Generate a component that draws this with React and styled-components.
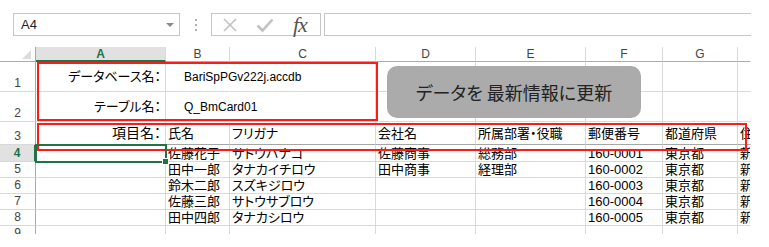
import React from "react";
import styled, { createGlobalStyle } from "styled-components";

const GREEN = "#217346";
const GRID = "#d9d9d9";
const CJK = `"Liberation Sans", "Noto Sans CJK JP", sans-serif`;

const COLS = [
  { key: "A", width: 130 },
  { key: "B", width: 64 },
  { key: "C", width: 146 },
  { key: "D", width: 100 },
  { key: "E", width: 110 },
  { key: "F", width: 77 },
  { key: "G", width: 75 },
  { key: "H", width: 13 },
];

const ROWS = [
  { num: 1, height: 30, kind: "meta", cells: ["データベース名：", "BariSpPGv222j.accdb"] },
  { num: 2, height: 30, kind: "meta", cells: ["テーブル名：", "Q_BmCard01"] },
  {
    num: 3,
    height: 23,
    kind: "head",
    cells: ["項目名：", "氏名", "フリガナ", "会社名", "所属部署・役職", "郵便番号", "都道府県", "住"],
  },
  { num: 4, height: 17, cells: ["", "佐藤花子", "サトウハナコ", "佐藤商事", "総務部", "160-0001", "東京都", "新"] },
  { num: 5, height: 16, cells: ["", "田中一郎", "タナカイチロウ", "田中商事", "経理部", "160-0002", "東京都", "新"] },
  { num: 6, height: 16, cells: ["", "鈴木二郎", "スズキジロウ", "", "", "160-0003", "東京都", "新"] },
  { num: 7, height: 16, cells: ["", "佐藤三郎", "サトウサブロウ", "", "", "160-0004", "東京都", "新"] },
  { num: 8, height: 16, cells: ["", "田中四郎", "タナカシロウ", "", "", "160-0005", "東京都", "新"] },
  { num: 9, height: 16, cells: [] },
];

const GlobalStyle = createGlobalStyle`
  body {
    margin: 0;
    background: #fff;
    font-family: ${CJK};
  }
`;

const Page = styled.div`
  width: 769px;
  height: 247px;
  overflow: hidden;
  background: #fff;
`;

const FormulaBar = styled.div`
  display: flex;
  align-items: stretch;
  height: 23px;
  padding: 13px 18px 0 13px;
`;

const NameBox = styled.div`
  box-sizing: border-box;
  width: 167px;
  border: 1px solid #c6c6c6;
  display: flex;
  align-items: center;
  justify-content: space-between;
  padding: 0 5px 0 7px;
  font-family: "Liberation Sans", sans-serif;
  font-size: 13px;
  color: #222;
`;

const Caret = styled.span`
  width: 0;
  height: 0;
  border-left: 4px solid transparent;
  border-right: 4px solid transparent;
  border-top: 4px solid #8a8a8a;
`;

const Grip = styled.div`
  width: 31px;
  display: flex;
  flex-direction: column;
  align-items: center;
  justify-content: center;
  gap: 3px;
`;

const GripDot = styled.span`
  width: 2px;
  height: 2px;
  background: #b0b0b0;
`;

const FxBox = styled.div`
  box-sizing: border-box;
  width: 110px;
  border: 1px solid #c6c6c6;
  display: flex;
  align-items: center;
  padding: 0 0 0 10px;
  gap: 18px;
`;

const FxText = styled.span`
  font-family: "Liberation Serif", serif;
  font-style: italic;
  font-size: 22px;
  line-height: 1;
  color: #555;
  letter-spacing: -1px;
  margin-left: 1px;
`;

const FormulaInput = styled.div`
  flex: 1;
  margin-left: 3px;
  border: 1px solid #c6c6c6;
  border-right: none;
`;

const Sheet = styled.div`
  position: relative;
  margin-top: 11px;
  width: 751px;
  height: 187px;
  overflow: hidden;
  font-feature-settings: "palt";
`;

const Grid = styled.div`
  display: grid;
  grid-template-columns: 36px ${COLS.map((c) => `${c.width}px`).join(" ")};
  grid-template-rows: 15px ${ROWS.map((r) => `${r.height}px`).join(" ")};
`;

const Corner = styled.div`
  box-sizing: border-box;
  border-right: 1px solid #ababab;
  border-bottom: 1px solid #ababab;
  display: flex;
  align-items: flex-end;
  justify-content: flex-end;
  padding: 0 4px 2px 0;
`;

const CornerMark = styled.span`
  width: 0;
  height: 0;
  border-left: 9px solid transparent;
  border-bottom: 9px solid #dcdcdc;
`;

const ColHeader = styled.div`
  box-sizing: border-box;
  background: ${(p) => (p.$active ? "#e1e1e1" : "#fff")};
  border-right: 1px solid ${(p) => (p.$last ? "transparent" : GRID)};
  border-bottom: ${(p) => (p.$active ? `2px solid ${GREEN}` : "1px solid #ababab")};
  display: flex;
  align-items: center;
  justify-content: center;
  font-family: "Liberation Sans", sans-serif;
  font-size: 12px;
  font-weight: ${(p) => (p.$active ? 700 : 400)};
  color: ${(p) => (p.$active ? GREEN : "#444")};
`;

const RowHeader = styled.div`
  box-sizing: border-box;
  background: ${(p) => (p.$active ? "#e1e1e1" : "#fff")};
  border-right: ${(p) => (p.$active ? `2px solid ${GREEN}` : "1px solid #ababab")};
  border-bottom: 1px solid ${GRID};
  display: flex;
  align-items: flex-end;
  justify-content: center;
  padding-bottom: 1px;
  font-family: "Liberation Sans", sans-serif;
  font-size: 12px;
  line-height: 13px;
  font-weight: ${(p) => (p.$active ? 700 : 400)};
  color: ${(p) => (p.$active ? GREEN : "#444")};
`;

const Cell = styled.div`
  box-sizing: border-box;
  border-right: 1px solid ${(p) => (p.$openRight ? "transparent" : GRID)};
  border-bottom: 1px solid ${(p) => (p.$strong ? "#a6a6a6" : GRID)};
  display: flex;
  align-items: center;
  justify-content: ${(p) => (p.$right ? "flex-end" : "flex-start")};
  padding: 0 ${(p) => p.$padRight}px 0 ${(p) => p.$padLeft}px;
  font-size: ${(p) => p.$size}px;
  line-height: 1;
  white-space: nowrap;
  overflow: ${(p) => (p.$spill ? "visible" : "hidden")};
  color: #000;
`;

const Outline = styled.div`
  position: absolute;
  box-sizing: border-box;
  border: 2px solid #ff1a1a;
  pointer-events: none;
`;

const RefreshButton = styled.div`
  position: absolute;
  left: 387px;
  top: 19px;
  width: 254px;
  height: 52px;
  border-radius: 10px;
  background: #ababab;
  display: flex;
  align-items: center;
  justify-content: center;
  font-family: "Noto Sans CJK JP", sans-serif;
  font-size: 18px;
  color: #222;
  white-space: pre;
`;

const Selection = styled.div`
  position: absolute;
  left: 35px;
  top: 97px;
  width: 132px;
  height: 19px;
  box-sizing: border-box;
  border: 2px solid ${GREEN};
`;

const FillHandle = styled.span`
  position: absolute;
  right: -4px;
  bottom: -4px;
  width: 5px;
  height: 5px;
  background: ${GREEN};
  border: 1px solid #fff;
`;

const cellProps = (row, colIndex) => {
  const isLast = colIndex === COLS.length - 1;
  if (row.kind === "meta") {
    if (colIndex === 0) return { $right: true, $padLeft: 2, $padRight: 4, $size: 13 };
    if (colIndex === 1) return { $openRight: true, $spill: true, $padLeft: 18, $padRight: 0, $size: 12 };
  }
  if (row.kind === "head" && colIndex === 0) {
    return { $right: true, $padLeft: 2, $padRight: 4, $size: 14, $strong: true };
  }
  return {
    $openRight: isLast,
    $strong: row.kind === "head",
    $padLeft: 2,
    $padRight: 2,
    $size: 13,
  };
};

const XIcon = () => (
  <svg width="16" height="16" viewBox="0 0 16 16">
    <path d="M2 2 L14 14 M14 2 L2 14" stroke="#c2c2c2" strokeWidth="1.6" fill="none" />
  </svg>
);

const CheckIcon = () => (
  <svg width="18" height="16" viewBox="0 0 18 16">
    <path d="M1.5 8.5 L6.5 13.5 L16.5 2.5" stroke="#c2c2c2" strokeWidth="2.6" fill="none" />
  </svg>
);

const App = () => {
  return (
    <Page>
      <GlobalStyle />
      <FormulaBar>
        <NameBox>
          A4
          <Caret />
        </NameBox>
        <Grip>
          <GripDot />
          <GripDot />
          <GripDot />
        </Grip>
        <FxBox>
          <XIcon />
          <CheckIcon />
          <FxText>fx</FxText>
        </FxBox>
        <FormulaInput />
      </FormulaBar>

      <Sheet>
        <Grid>
          <Corner>
            <CornerMark />
          </Corner>
          {COLS.map((c, i) => (
            <ColHeader key={c.key} $active={c.key === "A"} $last={i === COLS.length - 1}>
              {c.key === "H" ? "" : c.key}
            </ColHeader>
          ))}
          {ROWS.map((row) => (
            <React.Fragment key={row.num}>
              <RowHeader $active={row.num === 4}>{row.num}</RowHeader>
              {COLS.map((c, i) => (
                <Cell key={c.key} {...cellProps(row, i)}>
                  {row.cells[i] || ""}
                </Cell>
              ))}
            </React.Fragment>
          ))}
        </Grid>

        <Outline style={{ left: 37, top: 15, width: 341, height: 59 }} />
        <Outline style={{ left: 37, top: 76, width: 710, height: 28 }} />
        <RefreshButton>データを 最新情報に更新</RefreshButton>
        <Selection>
          <FillHandle />
        </Selection>
      </Sheet>
    </Page>
  );
};

export default App;
